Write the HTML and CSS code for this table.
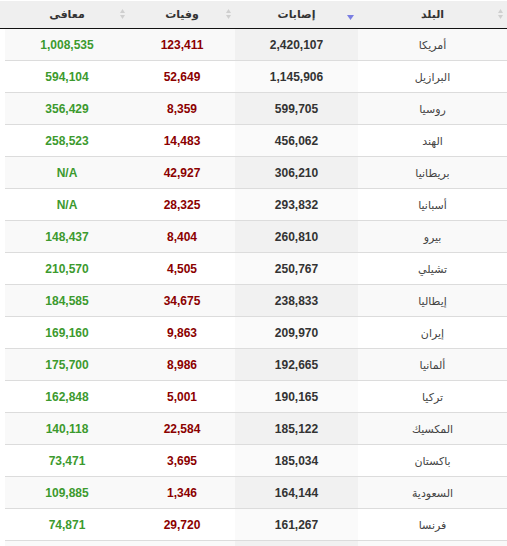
FILE: index.html
```html
<!DOCTYPE html>
<html lang="ar" dir="rtl">
<head>
<meta charset="utf-8">
<title>كورونا</title>
<link rel="stylesheet" href="styles.css">
</head>
<body>
<div class="tbl">
  <div class="head">
    <div class="th">البلد<svg class="ico" width="5" height="10" viewBox="0 0 5 10"><polygon points="2.5,0 5,4 0,4"/><polygon points="0,6 5,6 2.5,10"/></svg></div>
    <div class="th">إصابات<svg class="ico sorted" width="7" height="5" viewBox="0 0 7 5"><polygon points="0,0 7,0 3.5,5"/></svg></div>
    <div class="th">وفيات<svg class="ico" width="5" height="10" viewBox="0 0 5 10"><polygon points="2.5,0 5,4 0,4"/><polygon points="0,6 5,6 2.5,10"/></svg></div>
    <div class="th">معافى<svg class="ico" width="5" height="10" viewBox="0 0 5 10"><polygon points="2.5,0 5,4 0,4"/><polygon points="0,6 5,6 2.5,10"/></svg></div>
  </div>
  <div class="body">
    <div class="row"><div class="c name">أمريكا</div><div class="c cases">2,420,107</div><div class="c deaths">123,411</div><div class="c rec">1,008,535</div></div>
    <div class="row"><div class="c name">البرازيل</div><div class="c cases">1,145,906</div><div class="c deaths">52,649</div><div class="c rec">594,104</div></div>
    <div class="row"><div class="c name">روسيا</div><div class="c cases">599,705</div><div class="c deaths">8,359</div><div class="c rec">356,429</div></div>
    <div class="row"><div class="c name">الهند</div><div class="c cases">456,062</div><div class="c deaths">14,483</div><div class="c rec">258,523</div></div>
    <div class="row"><div class="c name">بريطانيا</div><div class="c cases">306,210</div><div class="c deaths">42,927</div><div class="c rec">N/A</div></div>
    <div class="row"><div class="c name">أسبانيا</div><div class="c cases">293,832</div><div class="c deaths">28,325</div><div class="c rec">N/A</div></div>
    <div class="row"><div class="c name">بيرو</div><div class="c cases">260,810</div><div class="c deaths">8,404</div><div class="c rec">148,437</div></div>
    <div class="row"><div class="c name">تشيلي</div><div class="c cases">250,767</div><div class="c deaths">4,505</div><div class="c rec">210,570</div></div>
    <div class="row"><div class="c name">إيطاليا</div><div class="c cases">238,833</div><div class="c deaths">34,675</div><div class="c rec">184,585</div></div>
    <div class="row"><div class="c name">إيران</div><div class="c cases">209,970</div><div class="c deaths">9,863</div><div class="c rec">169,160</div></div>
    <div class="row"><div class="c name">ألمانيا</div><div class="c cases">192,665</div><div class="c deaths">8,986</div><div class="c rec">175,700</div></div>
    <div class="row"><div class="c name">تركيا</div><div class="c cases">190,165</div><div class="c deaths">5,001</div><div class="c rec">162,848</div></div>
    <div class="row"><div class="c name">المكسيك</div><div class="c cases">185,122</div><div class="c deaths">22,584</div><div class="c rec">140,118</div></div>
    <div class="row"><div class="c name">باكستان</div><div class="c cases">185,034</div><div class="c deaths">3,695</div><div class="c rec">73,471</div></div>
    <div class="row"><div class="c name">السعودية</div><div class="c cases">164,144</div><div class="c deaths">1,346</div><div class="c rec">109,885</div></div>
    <div class="row"><div class="c name">فرنسا</div><div class="c cases">161,267</div><div class="c deaths">29,720</div><div class="c rec">74,871</div></div>
    <div class="row"><div class="c name"></div><div class="c cases"></div><div class="c deaths"></div><div class="c rec"></div></div>
  </div>
</div>
</body>
</html>
```
FILE: styles.css
```css
html, body {
  margin: 0;
  padding: 0;
  background: #fff;
}
body {
  font-family: "Liberation Sans", "DejaVu Sans", Arial, sans-serif;
  font-size: 12px;
  color: #333;
  overflow: hidden;
}
.tbl {
  direction: rtl;
  width: 507px;
  padding-top: 1px;
}
.head {
  display: grid;
  grid-template-columns: 149px 123px 106px 124px;
  padding-left: 5px;
  height: 27px;
  background: #efefef;
  border-bottom: 1px solid #111;
}
.th {
  position: relative;
  display: flex;
  align-items: center;
  justify-content: center;
  font-weight: bold;
  color: #333;
  font-size: 11px;
}
.ico {
  position: absolute;
  right: 4px;
  top: 8px;
  fill: #cfcfcf;
}
.ico.sorted {
  fill: #7a7ee2;
  top: 14px;
  right: 4px;
}
.body {
  margin-left: 5px;
}
.row {
  display: grid;
  grid-template-columns: 149px 123px 106px 124px;
  height: 31px;
  border-bottom: 1px solid #dcdcdc;
  background: #fff;
}
.row:nth-child(odd) {
  background: #f9f9f9;
}
.c {
  display: flex;
  align-items: center;
  justify-content: center;
  padding-top: 1px;
}
.name {
  color: #444;
  font-weight: normal;
  font-size: 11px;
}
.cases {
  color: #333;
  font-weight: bold;
  background: #fafafa;
}
.row:nth-child(odd) .cases {
  background: #f1f1f1;
}
.deaths {
  color: #8b0000;
  font-weight: bold;
}
.rec {
  color: #3c9a2e;
  font-weight: bold;
}
```
